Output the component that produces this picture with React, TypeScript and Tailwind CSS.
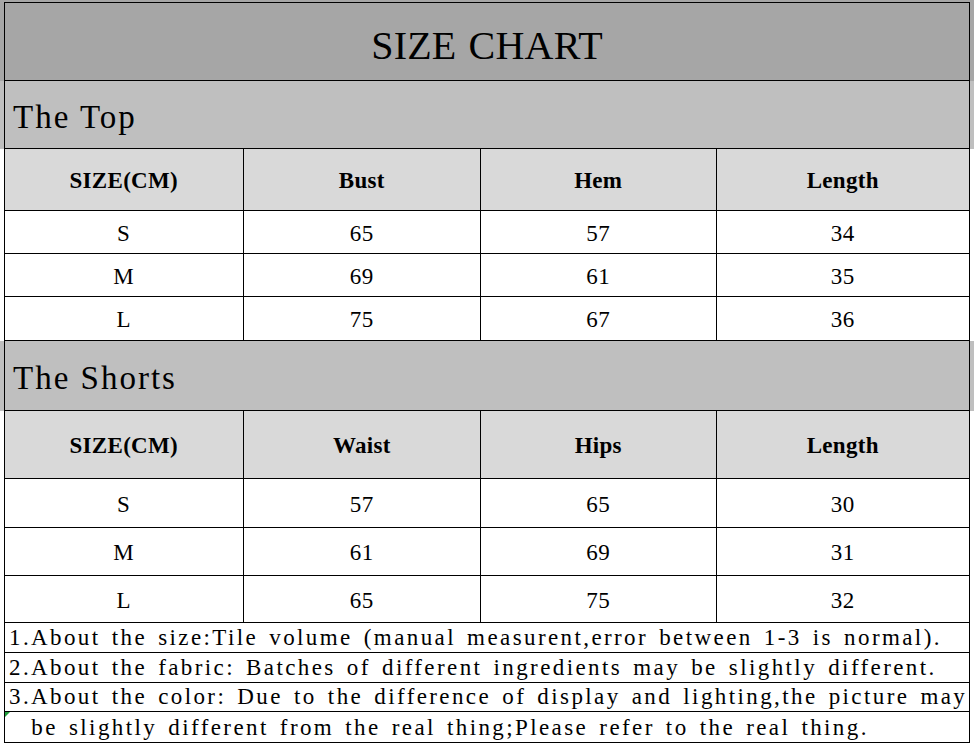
const serif = "font-['Liberation_Serif','Noto_Sans_CJK_SC',serif] text-black";

interface SizeSection {
  title: string;
  columns: string[];
  headerHeight: string;
  sectionHeight: string;
  rows: { cells: string[]; height: string }[];
}

const sections: SizeSection[] = [
  {
    title: 'The Top',
    columns: ['SIZE(CM)', 'Bust', 'Hem', 'Length'],
    sectionHeight: 'h-[68px]',
    headerHeight: 'h-[62px]',
    rows: [
      { cells: ['S', '65', '57', '34'], height: 'h-[43px]' },
      { cells: ['M', '69', '61', '35'], height: 'h-[43px]' },
      { cells: ['L', '75', '67', '36'], height: 'h-[44px]' },
    ],
  },
  {
    title: 'The Shorts',
    columns: ['SIZE(CM)', 'Waist', 'Hips', 'Length'],
    sectionHeight: 'h-[70px]',
    headerHeight: 'h-[68px]',
    rows: [
      { cells: ['S', '57', '65', '30'], height: 'h-[49px]' },
      { cells: ['M', '61', '69', '31'], height: 'h-[48px]' },
      { cells: ['L', '65', '75', '32'], height: 'h-[47px]' },
    ],
  },
];

const colWidths = ['w-[239px]', 'w-[238px]', 'w-[236px]', 'w-[253px]'];

const notes = [
  { text: '1.About the size:Tile volume (manual measurent,error between 1-3 is normal).', height: 'h-[30px]' },
  { text: '2.About the fabric: Batches of different ingredients may be slightly different.', height: 'h-[30px]' },
  { text: '3.About the color: Due to the difference of display and lighting,the picture may', height: 'h-[29px]' },
  { text: '  be slightly different from the real thing;Please refer to the real thing.', height: 'h-[31px]' },
];

const Row = ({ cells, height, header }: { cells: string[]; height: string; header?: boolean }) => (
  <div className={`flex ${height} ${header ? 'bg-[#d9d9d9]' : 'bg-white'} border-b border-black`}>
    {cells.map((cell, i) => (
      <div
        key={i}
        className={`${colWidths[i]} flex items-center justify-center pt-[4px] ${i < 3 ? 'border-r border-black' : ''} ${
          header ? 'text-[23px] tracking-[0.3px] font-bold' : 'text-[23px] tracking-[0.5px]'
        }`}
      >
        {cell}
      </div>
    ))}
  </div>
);

const App = () => {
  return (
    <div className={`w-[974px] h-[746px] bg-white overflow-hidden ${serif}`}>
      {/* Title */}
      <div className="bg-[#a6a6a6] pt-[2px] px-[4px]">
        <div className="h-[79px] border border-black flex items-center justify-center pt-[8px] text-[40px] tracking-[0.2px] [word-spacing:2px] leading-none">
          SIZE CHART
        </div>
      </div>

      {sections.map(section => (
        <div key={section.title}>
          <div className="bg-[#bfbfbf] px-[4px]">
            <div
              className={`${section.sectionHeight} border-x border-b border-black flex items-center pl-[8px] pt-[6px] text-[33px] tracking-[2px] leading-none`}
            >
              {section.title}
            </div>
          </div>
          <div className="px-[4px]">
            <div className="border-x border-black">
              <Row cells={section.columns} height={section.headerHeight} header />
              {section.rows.map((row, i) => (
                <Row key={i} cells={row.cells} height={row.height} />
              ))}
            </div>
          </div>
        </div>
      ))}

      {/* Notes */}
      <div className="px-[4px]">
        <div className="relative border-x border-black">
          {notes.map((note, i) => (
            <div
              key={i}
              className={`${note.height} border-b border-black flex items-end pb-[1px] pl-[4px] whitespace-pre text-[23px] tracking-[2.4px] [word-spacing:3px] leading-[26px]`}
            >
              {note.text}
            </div>
          ))}
          <svg className="absolute left-0 top-[89px]" width="5" height="5" viewBox="0 0 5 5">
            <polygon points="0,0 5,0 0,5" fill="#1f9d3a" />
          </svg>
        </div>
      </div>
    </div>
  );
};

export default App;
